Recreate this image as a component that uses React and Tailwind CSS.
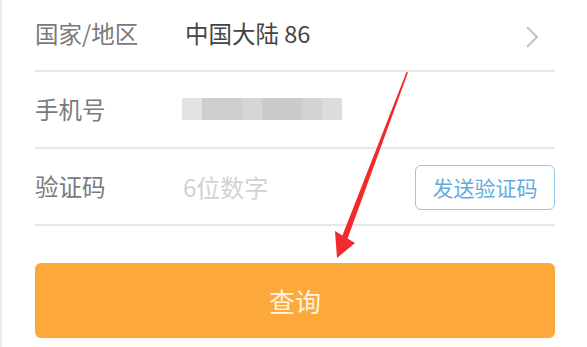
export default function App() {
  const font = { fontFamily: '"Noto Sans CJK SC", "Noto Sans", sans-serif' };
  const blocks = [
    ["w-[20px]", "bg-[#e3e3e3]"],
    ["w-[40px]", "bg-[#cecece]"],
    ["w-[20px]", "bg-[#d6d6d6]"],
    ["w-[40px]", "bg-[#cbcbcb]"],
    ["w-[20px]", "bg-[#d3d3d3]"],
    ["w-[20px]", "bg-[#dcdcdc]"],
  ];
  return (
    <div
      className="relative w-[587px] h-[347px] overflow-hidden bg-white border-l-2 border-[#ececec]"
      style={font}
    >
      <div className="pl-[33px] pr-[32px]">
        <div className="flex items-center h-[72px] border-b-2 border-[#e8e8e8]">
          <div className="w-[150px] text-[23.5px] text-[#7a7a7a] mt-[-3px]">国家/地区</div>
          <div className="flex-1 text-[23.5px] text-[#444444] mt-[-3px]">中国大陆 86</div>
          <svg width="14" height="24" viewBox="0 0 14 24" className="mr-[16px] mt-[4px]">
            <path d="M2 2 L12 12 L2 22" fill="none" stroke="#c4c4c4" strokeWidth="2" />
          </svg>
        </div>
        <div className="flex items-center h-[77px] border-b-2 border-[#e8e8e8]">
          <div className="w-[147px] text-[23.5px] text-[#7a7a7a]">手机号</div>
          <div className="flex h-[22px] mt-[-2px]">
            {blocks.map(([w, c], i) => (
              <div key={i} className={`${w} ${c} h-full`} />
            ))}
          </div>
        </div>
        <div className="flex items-center h-[77px] border-b-2 border-[#e8e8e8]">
          <div className="w-[148px] text-[23.5px] text-[#7a7a7a]">验证码</div>
          <div className="flex-1 text-[24px] text-[#d2d2d2]">6位数字</div>
          <div className="w-[140px] h-[45px] mt-[2px] flex items-center justify-center rounded-[6px] border-[1.5px] border-[#93c8e6] text-[21px] text-[#62ace0]">
            发送验证码
          </div>
        </div>
        <div className="mt-[37px] h-[75px] rounded-[6px] bg-[#fda83a] flex items-center justify-center text-[26px] text-[#fff3df]">
          查询
        </div>
      </div>
      <svg className="absolute left-0 top-0 pointer-events-none" width="587" height="347">
        <polygon
          points="404.5,72 406,72.5 345.6,238.5 353,243 335,258 333,231 340.4,235.5"
          fill="#f02b2b"
        />
      </svg>
    </div>
  );
}
